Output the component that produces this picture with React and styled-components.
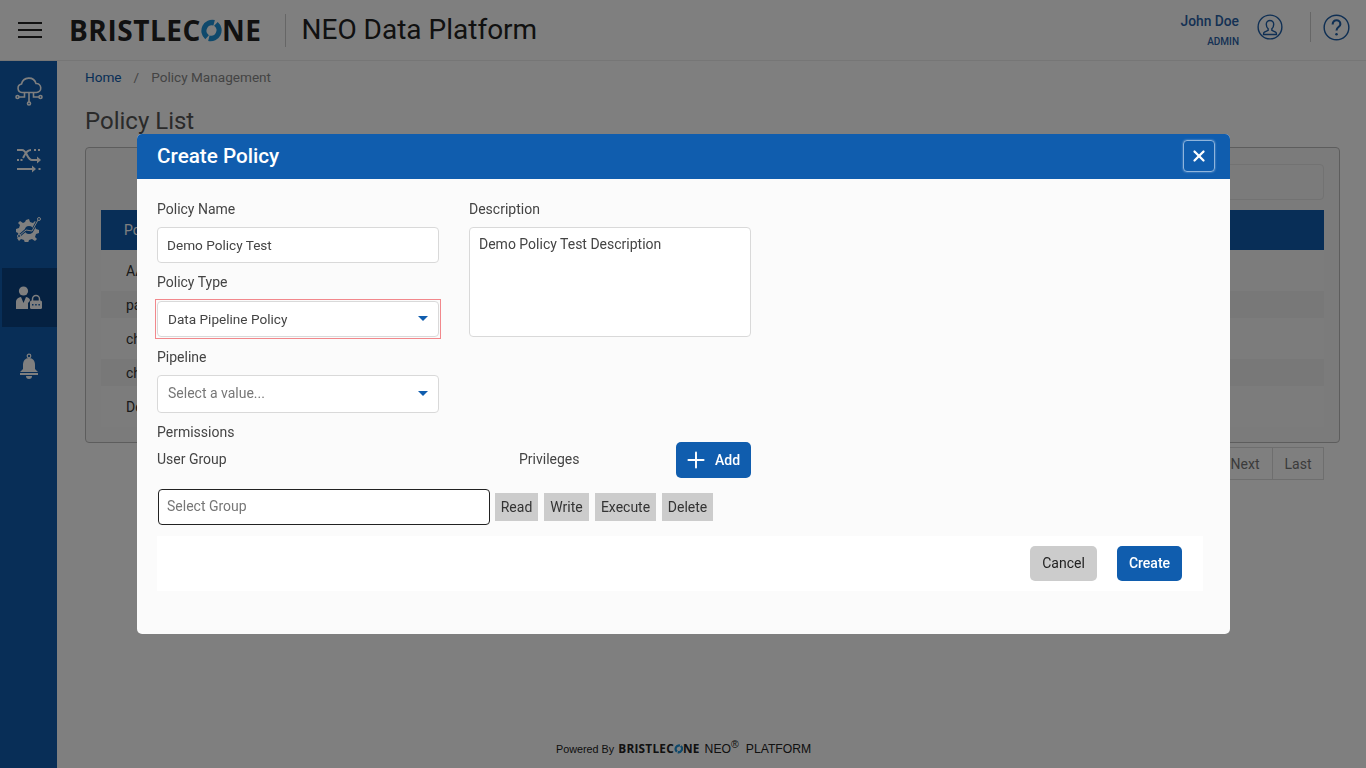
import React from "react";
import styled, { createGlobalStyle } from "styled-components";
import { X, Plus } from "lucide-react";

const Global = createGlobalStyle`
  html, body { margin: 0; padding: 0; height: 100%; overflow: hidden; }
  body { font-family: Roboto, "Liberation Sans", sans-serif; background: #fff; color: #333; }
  * { box-sizing: border-box; }
`;

const Page = styled.div`
  width: 1366px;
  height: 768px;
  display: flex;
  flex-direction: column;
`;
const TopBar = styled.header`
  height: 61px;
  flex: none;
  display: flex;
  align-items: center;
  border-bottom: 1px solid #ececec;
  background: #fff;
  padding: 0 16px 0 18px;
`;
const Burger = styled.div`
  width: 24px;
  display: flex;
  flex-direction: column;
  gap: 5px;
  margin-right: 27px;
  span { display: block; height: 2px; background: #222; }
`;
const Wordmark = styled.div`
  display: flex;
  align-items: center;
  font-family: "Open Sans", sans-serif;
  font-weight: 700;
  font-size: ${(p) => p.$size}px;
  line-height: 1;
  color: #222;
  letter-spacing: ${(p) => p.$track}px;
  svg { display: block; margin: 0 ${(p) => p.$gap}px; }
`;
const Divider = styled.div`
  width: 1px;
  height: ${(p) => p.$h}px;
  background: #ccc;
  margin: ${(p) => p.$margin};
`;
const AppTitle = styled.div`
  font-size: 28px;
  color: #222;
  font-weight: 400;
  margin-top: -2px;
`;
const UserBlock = styled.div`
  margin-left: auto;
  display: flex;
  align-items: center;
  padding-bottom: 6px;
`;
const UserText = styled.div`
  text-align: right;
  color: #2a62a8;
  font-weight: 500;
  margin: 6px 18px 0 0;
  div:first-child { font-size: 13.8px; line-height: 18px; }
  div:last-child { font-size: 10px; line-height: 14px; margin-top: 5px; }
`;
const Body = styled.div`
  flex: 1;
  display: flex;
  min-height: 0;
`;
const Side = styled.nav`
  width: 57px;
  flex: none;
  background: #105dae;
  display: flex;
  flex-direction: column;
  gap: 10px;
`;
const SideItem = styled.div`
  height: 59px;
  margin-left: 2px;
  display: flex;
  align-items: center;
  justify-content: center;
  padding-right: 2px;
  background: ${(p) => (p.$active ? "#0a4283" : "transparent")};
  color: #fff;
`;
const Main = styled.main`
  flex: 1;
  display: flex;
  flex-direction: column;
  padding: 0 26px 0 28px;
`;
const Crumbs = styled.div`
  font-size: 13.6px;
  line-height: 16px;
  margin-top: 8px;
  color: #888;
  display: flex;
  gap: 12px;
  a { color: #105dae; }
`;
const PageTitle = styled.h1`
  font-size: 24px;
  font-weight: 400;
  margin: 20px 0 0;
  line-height: 32px;
  color: #555;
`;
const Card = styled.section`
  margin-top: 10px;
  height: 296px;
  border: 1px solid #bbb;
  border-radius: 4px;
  padding: 16px 15px;
  background: #f6f6f6;
`;
const Search = styled.div`
  height: 36px;
  width: 500px;
  margin-left: auto;
  border: 1px solid #e4e4e4;
  border-radius: 4px;
`;
const THead = styled.div`
  margin-top: 10px;
  height: 40px;
  background: #105dae;
  color: #fff;
  font-size: 14px;
  display: flex;
  align-items: center;
  padding-left: 23px;
`;
const Row = styled.div`
  height: ${(p) => (p.$odd ? 41 : 27)}px;
  display: flex;
  align-items: center;
  padding-left: 25px;
  font-size: 14px;
  color: #333;
  background: ${(p) => (p.$odd ? "#f9f9f9" : "#f0f0f0")};
`;
const Pager = styled.div`
  display: flex;
  justify-content: flex-end;
  margin-top: 4px;
`;
const PageBtn = styled.div`
  height: 33px;
  width: ${(p) => p.$w}px;
  display: flex;
  align-items: center;
  justify-content: center;
  border: 1px solid #ddd;
  margin-left: -1px;
  font-size: 14px;
  color: #777;
  margin-right: ${(p) => p.$mr || 0}px;
`;
const Footer = styled.footer`
  margin: auto 0 12px 471px;
  display: flex;
  align-items: center;
  color: #222;
`;
const Powered = styled.span`
  font-family: "Liberation Sans", sans-serif;
  font-size: 10.8px;
  margin-right: 4px;
`;
const Neo = styled.span`
  font-family: "Liberation Sans", sans-serif;
  font-size: 12.2px;
  margin-left: 5px;
  sup { font-size: 10.5px; line-height: 0; }
  b { font-weight: 400; margin-left: 7px; }
`;

const Overlay = styled.div`
  position: fixed;
  inset: 0;
  background: rgba(0, 0, 0, 0.5);
`;
const Modal = styled.div`
  position: absolute;
  left: 137px;
  top: 134px;
  width: 1093px;
  height: 500px;
  background: #fbfbfb;
  border-radius: 5px;
  overflow: hidden;
  display: flex;
  flex-direction: column;
`;
const ModalHead = styled.div`
  height: 45px;
  flex: none;
  background: #105dae;
  color: #fff;
  display: flex;
  align-items: center;
  justify-content: space-between;
  padding: 0 15px 2px 20px;
  font-size: 20.7px;
  font-weight: 500;
`;
const CloseBtn = styled.div`
  width: 32px;
  height: 32px;
  border: 1px solid #8fb4dc;
  border-radius: 4px;
  box-shadow: 0 0 2px #8fb4dc;
  display: flex;
  align-items: center;
  justify-content: center;
`;
const ModalBody = styled.div`
  padding: 21px 27px 0 20px;
  display: flex;
  flex-direction: column;
`;
const Columns = styled.div`
  display: flex;
  gap: 30px;
`;
const Col = styled.div`
  width: 282px;
  display: flex;
  flex-direction: column;
`;
const Label = styled.label`
  display: block;
  font-size: 14px;
  line-height: 18px;
  color: #444;
  margin-top: ${(p) => p.$mt || 0}px;
`;
const Field = styled.div`
  margin-top: ${(p) => p.$mt || 0}px;
  height: ${(p) => p.$h}px;
  background: #fff;
  border: 1px solid #d9d9d9;
  border-radius: 4px;
  display: flex;
  align-items: ${(p) => (p.$top ? "flex-start" : "center")};
  justify-content: space-between;
  padding: ${(p) => p.$pad};
  font-size: ${(p) => p.$fs || 14}px;
  line-height: 18px;
  color: ${(p) => (p.$muted ? "#777" : "#444")};
`;
const InvalidBox = styled.div`
  margin: 8px -2px 0;
  border: 1px solid #f2888c;
  padding: 1px;
`;
const Caret = styled.i`
  width: 0;
  height: 0;
  border-left: 5.5px solid transparent;
  border-right: 5.5px solid transparent;
  border-top: 5px solid #105dae;
  margin-top: ${(p) => p.$mt}px;
`;
const PermHead = styled.div`
  width: 594px;
  display: flex;
  align-items: center;
  height: 36px;
  margin-top: 1px;
  font-size: 14px;
  color: #444;
  span { padding-bottom: 2px; }
  span:nth-child(1) { width: 362px; }
  span:nth-child(2) { width: 157px; }
`;
const PrimaryBtn = styled.button`
  border: 0;
  background: #105dae;
  color: #fff;
  border-radius: 5px;
  font: 500 14px Roboto, sans-serif;
  height: ${(p) => p.$h}px;
  width: ${(p) => p.$w}px;
  display: flex;
  align-items: center;
  justify-content: center;
  gap: 6px;
  padding: 0 ${(p) => p.$pr || 0}px ${(p) => p.$pb || 0}px 0;
`;
const PermRow = styled.div`
  margin-top: 11px;
  padding-left: 1px;
  display: flex;
  align-items: center;
  gap: 6px;
`;
const GroupInput = styled.div`
  width: 332px;
  height: 36px;
  border: 1px solid #222;
  border-radius: 4px;
  background: #fff;
  display: flex;
  align-items: center;
  padding: 0 0 2px 8px;
  font-size: 14px;
  color: #777;
  margin-right: -1px;
`;
const Chip = styled.div`
  height: 28px;
  width: ${(p) => p.$w}px;
  background: #ccc;
  color: #333;
  font-size: 14px;
  display: flex;
  align-items: center;
  justify-content: center;
`;
const ModalFoot = styled.div`
  margin-top: 11px;
  height: 55px;
  background: #fff;
  display: flex;
  align-items: center;
  justify-content: flex-end;
  gap: 20px;
  padding-right: 21px;
`;
const CancelBtn = styled.button`
  border: 0;
  background: #ccc;
  color: #222;
  border-radius: 5px;
  font: 400 14px Roboto, sans-serif;
  width: 67px;
  height: 35px;
  padding: 0 0 2px;
`;

const Cone = ({ size }) => (
  <svg width={size} height={size} viewBox="0 0 24 24">
    <path d="M5.5 21A11.5 11.5 0 0 1 15.5 1L14 6.8A5.7 5.7 0 0 0 9.3 17Z" fill="#1f93d8" />
    <path d="M18.5 3A11.5 11.5 0 0 1 8.5 23L10 17.2A5.7 5.7 0 0 0 14.7 7Z" fill="#1f93d8" />
  </svg>
);
const Logo = ({ size, track, cone, gap }) => (
  <Wordmark $size={size} $track={track} $gap={gap}>
    BRISTLEC<Cone size={cone} />NE
  </Wordmark>
);
const CircleIcon = ({ children, size }) => (
  <svg width={size} height={size} viewBox="0 0 28 28" fill="none" stroke="#1f5fa8" strokeWidth="1.5">
    <circle cx="14" cy="14" r="12.8" />
    {children}
  </svg>
);
const CloudIcon = () => (
  <svg width="30" height="30" viewBox="0 0 30 30" fill="none" stroke="currentColor" strokeWidth="1.6">
    <path d="M8 16.5a4.3 4.3 0 0 1-.5-8.5A7.5 7.5 0 0 1 22 7.5a4.5 4.5 0 0 1 .5 9Z" />
    <path d="M15 16.5V26M10.5 16.5v4.5H5M19.5 16.5v4.5H25" />
    <circle cx="3.5" cy="21" r="1.5" /><circle cx="26.5" cy="21" r="1.5" /><circle cx="15" cy="27.5" r="1.5" />
  </svg>
);
const FlowIcon = () => (
  <svg width="26" height="26" viewBox="0 0 26 26" fill="none" stroke="currentColor" strokeWidth="2">
    <path d="M1 3h5c5 0 5 10 10 10h6" />
    <path d="M7 11C9 8 10 3 15 3" />
    <path d="M21 9.5l4 3.5-4 3.5Z" fill="currentColor" stroke="none" />
    <path d="M1 22h16" />
    <path d="M16 18.5l4 3.5-4 3.5Z" fill="currentColor" stroke="none" />
    <path d="M18 3h2M22 3h2M1 13h2M4.5 13h2M22.5 22h2" />
  </svg>
);
const GearIcon = () => (
  <svg width="26" height="26" viewBox="0 0 26 26">
    <path fill="currentColor" d="M10 4l3-1 1 3 3 1 2-2 2 2-2 3 1 3 3 1v3l-3 1-1 3 2 2-2 2-3-2-3 1-1 3h-3l-1-3-3-1-2 2-2-3 2-2-1-3-2-1v-3l3-1 1-3-2-2 2-2 3 2 2-1Z" />
    <circle cx="13" cy="14" r="4" fill="#105dae" />
    <path d="M3 20l7-6 6 1 6-11" fill="none" stroke="#105dae" strokeWidth="2.6" />
    <path d="M3 20l7-6 6 1 6-11" fill="none" stroke="currentColor" strokeWidth="1" />
    <circle cx="23" cy="3" r="1.5" fill="#105dae" stroke="currentColor" />
    <circle cx="3" cy="20" r="1.5" fill="#105dae" stroke="currentColor" />
  </svg>
);
const AdminIcon = () => (
  <svg width="28" height="26" viewBox="0 0 28 26" fill="currentColor">
    <circle cx="8.5" cy="6" r="4.6" />
    <path d="M1 24v-7c0-3 2.5-4.5 5-5l2.5 6 2.5-6c1.5.3 3 1 3.8 2.2V16L13 18v6Z" />
    <path d="M17.5 16v-2a3.5 3.5 0 0 1 7 0v2" fill="none" stroke="currentColor" strokeWidth="1.5" />
    <rect x="15" y="15.5" width="12" height="8.5" rx="1.5" />
    <path d="M17 19.8h1.500M20.200 19.800h1.500M23.400 19.800h1.500" stroke="#105dae" strokeWidth="1.6" />
  </svg>
);
const BellIcon = () => (
  <svg width="20" height="28" viewBox="0 0 20 28" fill="currentColor">
    <circle cx="10" cy="3" r="1.8" fill="none" stroke="currentColor" strokeWidth="1.2" />
    <path d="M10 5c4 0 6 3 6 7v4l3 3H1l3-3v-4c0-4 2-7 6-7Z" />
    <path d="M1 20h18v2H1Z" />
    <path d="M7 23h6a3 3 0 0 1-6 0Z" />
  </svg>
);

export default function App() {
  return (
    <>
      <Global />
      <Page>
        <TopBar>
          <Burger><span /><span /><span /></Burger>
          <Logo size={28} track={0.55} cone={23} gap={-1} />
          <Divider $h={33} $margin="0 16px 0 23px" />
          <AppTitle>NEO Data Platform</AppTitle>
          <UserBlock>
            <UserText><div>John Doe</div><div>ADMIN</div></UserText>
            <CircleIcon size={26}>
              <path d="M10 11a4 4 0 0 1 8 0c0 2.5-1 4-2 5v1.5l4 2c1 .5 1 1 1 2.5H7c0-1.5 0-2 1-2.5l4-2V16c-1-1-2-2.5-2-5Z" />
            </CircleIcon>
            <Divider $h={30} $margin="0 12px 0 27px" />
            <CircleIcon size={27}>
              <path d="M10 11c0-3 2-4.5 4-4.5s4 1.5 4 4c0 3-4 3-4 6.5" strokeWidth="2.2" />
              <circle cx="14" cy="21" r="1.3" fill="#1f5fa8" stroke="none" />
            </CircleIcon>
          </UserBlock>
        </TopBar>
        <Body>
          <Side>
            <SideItem><CloudIcon /></SideItem>
            <SideItem><FlowIcon /></SideItem>
            <SideItem><GearIcon /></SideItem>
            <SideItem $active><AdminIcon /></SideItem>
            <SideItem><BellIcon /></SideItem>
          </Side>
          <Main>
            <Crumbs><a>Home</a><span>/</span><span>Policy Management</span></Crumbs>
            <PageTitle>Policy List</PageTitle>
            <Card>
              <Search />
              <THead>Policy Name</THead>
              <Row $odd>AA</Row>
              <Row>pa</Row>
              <Row $odd>ch</Row>
              <Row>ch</Row>
              <Row $odd>De</Row>
            </Card>
            <Pager>
              <PageBtn $w={56}>Next</PageBtn>
              <PageBtn $w={52} $mr={16}>Last</PageBtn>
            </Pager>
            <Footer>
              <Powered>Powered By</Powered>
              <Logo size={11.8} track={0.25} cone={9.7} gap={-0.4} />
              <Neo>NEO<sup>®</sup><b>PLATFORM</b></Neo>
            </Footer>
          </Main>
        </Body>
      </Page>
      <Overlay>
        <Modal>
          <ModalHead>
            Create Policy
            <CloseBtn><X size={18} color="#fff" strokeWidth={3} /></CloseBtn>
          </ModalHead>
          <ModalBody>
            <Columns>
              <Col>
                <Label>Policy Name</Label>
                <Field $mt={9} $h={36} $pad="0 9px" $fs={13.6}>Demo Policy Test</Field>
                <Label $mt={10}>Policy Type</Label>
                <InvalidBox>
                  <Field $h={36} $pad="0 10px" $fs={13.6}>Data Pipeline Policy<Caret $mt={-1} /></Field>
                </InvalidBox>
                <Label $mt={9}>Pipeline</Label>
                <Field $mt={9} $h={38} $pad="0 10px 2px" $muted>Select a value...<Caret $mt={0} /></Field>
              </Col>
              <Col>
                <Label>Description</Label>
                <Field $mt={9} $h={110} $top $pad="7px 9px">Demo Policy Test Description</Field>
              </Col>
            </Columns>
            <Label $mt={10}>Permissions</Label>
            <PermHead>
              <span>User Group</span>
              <span>Privileges</span>
              <PrimaryBtn $w={75} $h={36} $pr={4}><Plus size={26} strokeWidth={1.8} />Add</PrimaryBtn>
            </PermHead>
            <PermRow>
              <GroupInput>Select Group</GroupInput>
              <Chip $w={43}>Read</Chip>
              <Chip $w={45}>Write</Chip>
              <Chip $w={61}>Execute</Chip>
              <Chip $w={51}>Delete</Chip>
            </PermRow>
            <ModalFoot>
              <CancelBtn>Cancel</CancelBtn>
              <PrimaryBtn $w={65} $h={35} $pb={2}>Create</PrimaryBtn>
            </ModalFoot>
          </ModalBody>
        </Modal>
      </Overlay>
    </>
  );
}
